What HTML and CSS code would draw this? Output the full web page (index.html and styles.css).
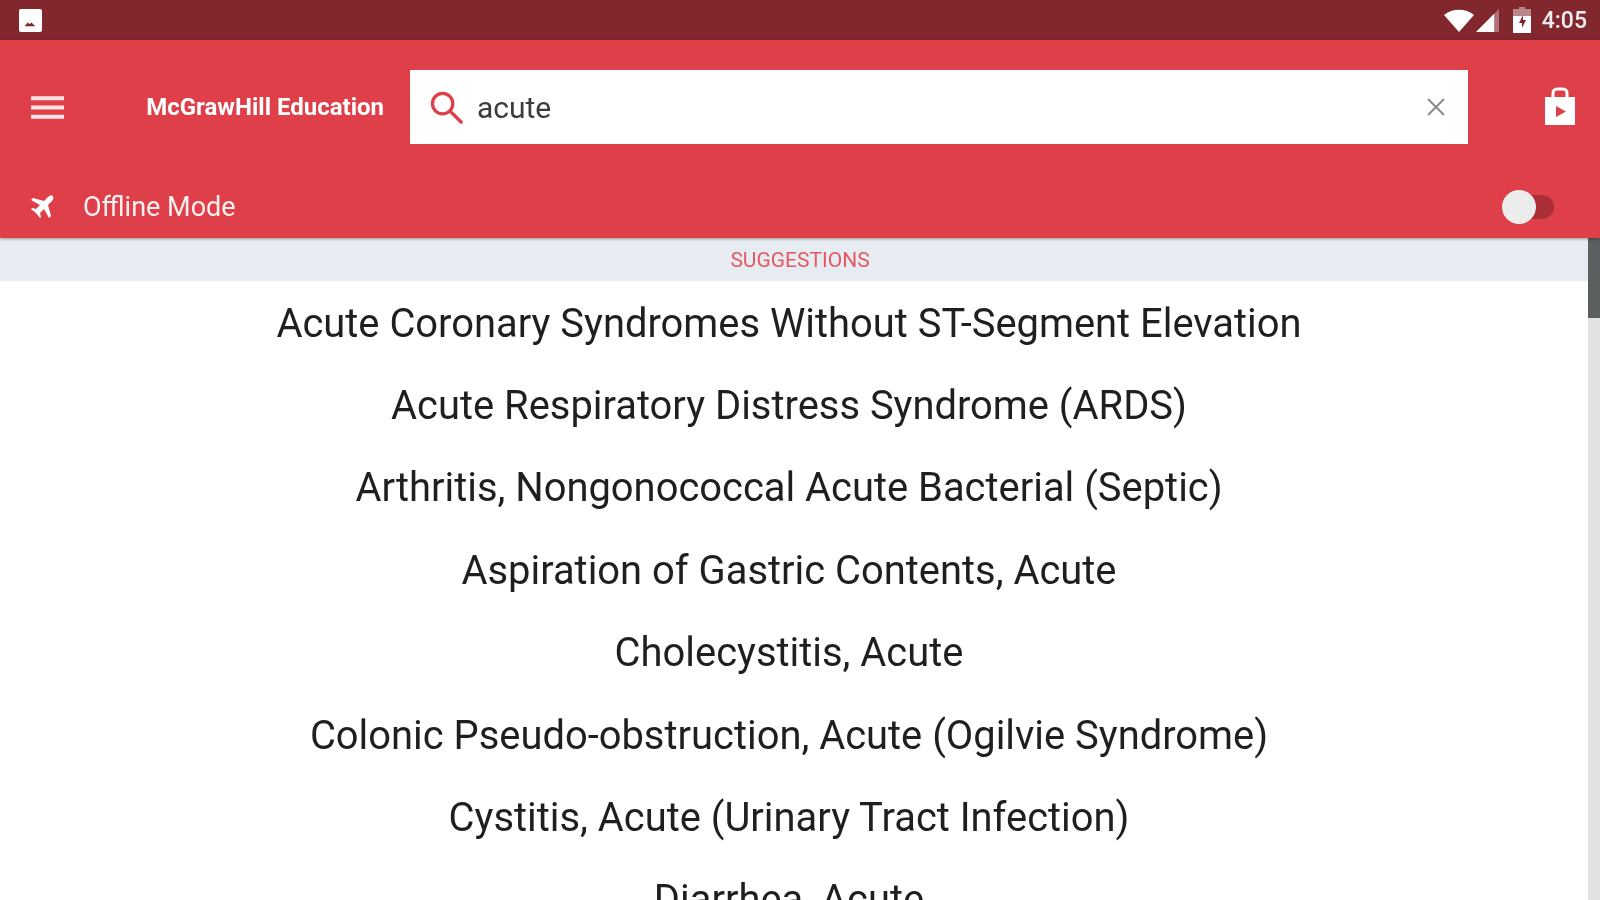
FILE: index.html
```html
<!DOCTYPE html>
<html lang="en">
<head>
<meta charset="utf-8">
<title>Suggestions</title>
<link rel="stylesheet" href="styles.css">
</head>
<body>
<div class="app">
  <div class="status">
    <svg class="pic" viewBox="0 0 24 24"><rect width="24" height="24" rx="2" fill="#fff"/><path d="M6 18l3-4 2 2 2-2 4 4z" fill="#7f252b"/></svg>
    <div class="status-right">
      <svg class="wifi" viewBox="0 0 30 24"><path d="M15 24L0 7C8 0 22 0 30 7z" fill="#fff"/></svg>
      <svg class="signal" viewBox="0 0 24 24"><path d="M0 24L24 0v24z" fill="#fff" opacity=".35"/><path d="M0 24L19 5v19z" fill="#fff"/></svg>
      <svg class="battery" viewBox="0 0 18 26"><path d="M6 0h6v2h6v24H0V2h6z" fill="#fff" opacity=".45"/><path d="M0 9h18v17H0z" fill="#fff"/><path d="M10 8l-4 8h3v5l4-8h-3z" fill="#7f252b"/></svg>
      <span class="time">4:05</span>
    </div>
  </div>
  <header class="header">
    <div class="top-row">
      <svg class="menu" viewBox="0 0 32 24"><path d="M0 1h32v4H0zM0 10h32v4H0zM0 19h32v4H0z" fill="#fff" opacity=".85"/></svg>
      <span class="brand">McGrawHill Education</span>
      <div class="search">
        <svg class="lens" viewBox="0 0 34 34"><circle cx="13" cy="13" r="10.5" fill="none" stroke="#df3f49" stroke-width="3.4"/><path d="M21 21l11 11" stroke="#df3f49" stroke-width="3.6" stroke-linecap="round"/></svg>
        <span class="query">acute</span>
        <svg class="clear" viewBox="0 0 20 20"><path d="M2 2l16 16M18 2L2 18" stroke="#8a8a8a" stroke-width="2"/></svg>
      </div>
      <svg class="bag" viewBox="0 0 32 40"><path d="M9 10V6a4 4 0 0 1 4-4h6a4 4 0 0 1 4 4v4" fill="none" stroke="#fff" stroke-width="3"/><path d="M1 10h30v28H1z" fill="#fff"/><path d="M12 19l10 5.500-10 5.500z" fill="#df3f49"/></svg>
    </div>
    <div class="offline-row">
      <svg class="plane" viewBox="0 0 24 24"><path d="M23 1c-2-1-4 0-5 1l-4 4L3 3 1 5l9 5-4 4-4-1-1 1 5 4 4 5 1-1-1-4 4-4 5 9 2-2-3-11 4-4c1-1 2-3 1-4z" fill="#fff"/></svg>
      <span class="offline-label">Offline Mode</span>
      <div class="toggle"><span class="knob"></span></div>
    </div>
  </header>
  <div class="body">
    <main class="content">
      <div class="section-title">SUGGESTIONS</div>
      <ul class="list">
        <li>Acute Coronary Syndromes Without ST-Segment Elevation</li>
        <li>Acute Respiratory Distress Syndrome (ARDS)</li>
        <li>Arthritis, Nongonococcal Acute Bacterial (Septic)</li>
        <li>Aspiration of Gastric Contents, Acute</li>
        <li>Cholecystitis, Acute</li>
        <li>Colonic Pseudo-obstruction, Acute (Ogilvie Syndrome)</li>
        <li>Cystitis, Acute (Urinary Tract Infection)</li>
        <li>Diarrhea, Acute</li>
      </ul>
    </main>
    <div class="scrollbar"><div class="thumb"></div></div>
  </div>
</div>
</body>
</html>
```
FILE: styles.css
```css
* { box-sizing: border-box; }
html, body { margin: 0; height: 100%; overflow: hidden; }
body { font-family: Roboto, "Liberation Sans", sans-serif; background: #fff; }
.app { width: 1600px; height: 900px; display: flex; flex-direction: column; overflow: hidden; filter: blur(0.7px); }
.status { height: 40px; flex: none; background: #82272d; display: flex; align-items: center; justify-content: space-between; padding: 0 13px 0 19px; }
.pic { width: 23px; height: 23px; }
.status-right { display: flex; align-items: center; }
.wifi { width: 30px; height: 24px; margin-right: 2px; }
.signal { width: 23px; height: 23px; margin-right: 14px; }
.battery { width: 18px; height: 26px; margin-right: 11px; }
.time { color: #eee; font-size: 23px; font-weight: 500; }
.header { height: 198px; flex: none; background: #df3f49; box-shadow: 0 1px 3px rgba(0,0,0,.35); position: relative; z-index: 1; display: flex; flex-direction: column; }
.top-row { display: flex; align-items: center; height: 74px; margin-top: 30px; padding-left: 31px; }
.menu { width: 33px; height: 25px; flex: none; }
.brand { width: 320px; flex: none; color: #fff; font-size: 24px; font-weight: 700; text-align: right; }
.search { margin-left: 26px; width: 1058px; height: 74px; background: #fff; display: flex; align-items: center; padding: 0 22px 0 20px; flex: none; }
.lens { width: 33px; height: 33px; flex: none; }
.query { flex: 1; margin-left: 14px; font-size: 30px; color: #3c3c3c; }
.clear { width: 20px; height: 20px; flex: none; }
.bag { width: 32px; height: 40px; flex: none; margin-left: 76px; }
.offline-row { display: flex; align-items: center; height: 64px; margin-top: 31px; padding-left: 30px; }
.plane { width: 24px; height: 24px; flex: none; }
.offline-label { color: #fff; font-size: 27px; margin-left: 29px; opacity: .92; }
.toggle { position: relative; margin-left: auto; margin-right: 46px; width: 52px; height: 24px; background: #ab2f37; border-radius: 12px; }
.knob { position: absolute; left: 0; top: -5px; width: 34px; height: 34px; border-radius: 50%; background: #ececec; }
.body { flex: 1; display: flex; min-height: 0; }
.content { flex: 1; min-width: 0; overflow: hidden; }
.section-title { height: 43px; background: #e7ecf3; color: #e55a62; font-size: 21px; display: flex; align-items: center; justify-content: center; padding-left: 12px; }
.list { list-style: none; margin: 0; padding: 1px 10px 0 0; }
.list li { height: 82.400px; display: flex; align-items: center; justify-content: center; font-size: 39.900px; color: #1f1f1f; white-space: nowrap; }
.scrollbar { width: 12px; flex: none; background: #e2e2e2; }
.thumb { height: 80px; background: #5c5f60; }
```
